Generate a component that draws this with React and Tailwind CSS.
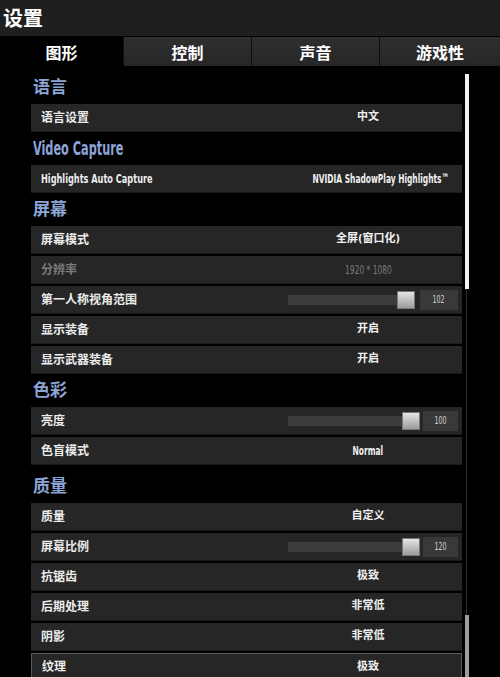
import React from 'react';

const cjk = "font-['Noto_Sans_CJK_SC',sans-serif]";
const narrow = "font-['DejaVu_Sans_Condensed','Noto_Sans_CJK_SC',sans-serif]";

const tabs = [
  { name: '图形', w: 'w-[123px]', active: true },
  { name: '控制', w: 'w-[128px]' },
  { name: '声音', w: 'w-[128px]' },
  { name: '游戏性', w: 'flex-1' },
];

const sections = [
  {
    title: '语言',
    rows: [{ label: '语言设置', value: '中文' }],
  },
  {
    title: 'Video Capture',
    latin: true,
    rows: [{ label: 'Highlights Auto Capture', value: 'NVIDIA ShadowPlay Highlights™', latin: true }],
  },
  {
    title: '屏幕',
    rows: [
      { label: '屏幕模式', value: '全屏(窗口化)' },
      { label: '分辨率', value: '1920 * 1080', dim: true, latinValue: true },
      { label: '第一人称视角范围', slider: '102', box: 'w-[38px]', track: 'w-[109px]' },
      { label: '显示装备', value: '开启' },
      { label: '显示武器装备', value: '开启' },
    ],
  },
  {
    title: '色彩',
    rows: [
      { label: '亮度', slider: '100', box: 'w-[35px]', track: 'w-[114px]' },
      { label: '色盲模式', value: 'Normal', latinValue: true },
    ],
  },
  {
    title: '质量',
    spaced: true,
    rows: [
      { label: '质量', value: '自定义' },
      { label: '屏幕比例', slider: '120', box: 'w-[35px]', track: 'w-[114px]' },
      { label: '抗锯齿', value: '极致' },
      { label: '后期处理', value: '非常低' },
      { label: '阴影', value: '非常低' },
      { label: '纹理', value: '极致', selected: true },
    ],
  },
];

const Slider = ({ row }) => (
  <div className="flex items-center h-full pl-[14px] pr-[4px] w-full">
    <div className={`${row.track} h-[10px] bg-[#3c3c3c] shrink-0`} />
    <div className="w-[18px] h-[18px] shrink-0 bg-gradient-to-b from-[#e6e6e6] to-[#9c9c9c] border border-[#777]" />
    <div className="flex-1" />
    <div className={`${row.box} h-[20px] bg-[#393939] flex items-center justify-center text-[10px] text-[#cfcfcf] ${narrow}`}>
      <span className="inline-block scale-x-[0.7]">{row.slider}</span>
    </div>
  </div>
);

const Row = ({ row }) => (
  <div
    className={`h-[28px] flex items-center bg-[#262626] ${
      row.selected ? 'border border-[#5a5a5a]' : 'border-b border-[#1a1a1a]'
    }`}
  >
    <div
      className={`w-[243px] shrink-0 pl-[10px] font-bold whitespace-nowrap ${narrow} ${
        row.latin ? 'text-[13px]' : 'text-[12px]'
      } ${row.dim ? 'text-[#7a7a7a]' : 'text-[#ececec]'}`}
    >
      <span className={`inline-block origin-left ${row.latin ? 'scale-x-[0.7]' : ''}`}>{row.label}</span>
    </div>
    <div className="flex-1 h-full flex items-center justify-center whitespace-nowrap">
      {row.slider ? (
        <Slider row={row} />
      ) : (
        <span
          className={`inline-block font-bold ${narrow} ${
            row.latin || row.latinValue ? 'text-[13px] scale-x-[0.64]' : 'text-[11px]'
          } ${row.dim ? 'text-[#7a7a7a] font-normal' : 'text-[#f0f0f0]'}`}
        >
          {row.value}
        </span>
      )}
    </div>
  </div>
);

export default function App() {
  return (
    <div className="w-[500px] h-[677px] overflow-hidden bg-black flex flex-col">
      {/* Title */}
      <div className="h-[37px] shrink-0 bg-[#1f1f1f] flex items-center pl-[3px] border-b border-black">
        <span className={`text-[20px] font-bold text-white ${cjk}`}>设置</span>
      </div>

      {/* Tabs */}
      <div className="h-[29px] shrink-0 flex">
        {tabs.map((t) => (
          <div
            key={t.name}
            className={`${t.w} flex items-center justify-center text-[16px] font-bold text-white ${cjk} ${
              t.active ? 'bg-black' : 'bg-gradient-to-b from-[#2f2f2f] to-[#262626] border-l border-[#0e0e0e]'
            }`}
          >
            {t.name}
          </div>
        ))}
      </div>

      {/* Content */}
      <div className="flex-1 flex pl-[31px] pt-[7px] min-h-0">
        <div className="w-[431px] flex flex-col gap-[2px]">
          {sections.map((s) => (
            <React.Fragment key={s.title}>
              <div
                className={`h-[29px] shrink-0 flex items-center pl-[2px] font-bold text-[#8ca4d4] whitespace-nowrap ${narrow} ${
                  s.latin ? 'text-[19px]' : 'text-[17px]'
                } ${s.spaced ? 'mt-[5px]' : ''}`}
              >
                <span className={`inline-block origin-left ${s.latin ? 'scale-x-[0.66]' : ''}`}>{s.title}</span>
              </div>
              {s.rows.map((r) => (
                <div key={r.label} className="shrink-0">
                  <Row row={r} />
                </div>
              ))}
            </React.Fragment>
          ))}
        </div>

        {/* Scrollbar */}
        <div className="ml-[3px] w-[5px] flex flex-col pt-[1px]">
          <div className="h-[215px] w-[4px] bg-[#f2f2f2]" />
          <div className="h-[326px] w-[1px] ml-[1px] bg-[#2c2c2c]" />
          <div className="flex-1 w-[4px] bg-[#9d9d9d]" />
        </div>
      </div>
    </div>
  );
}
